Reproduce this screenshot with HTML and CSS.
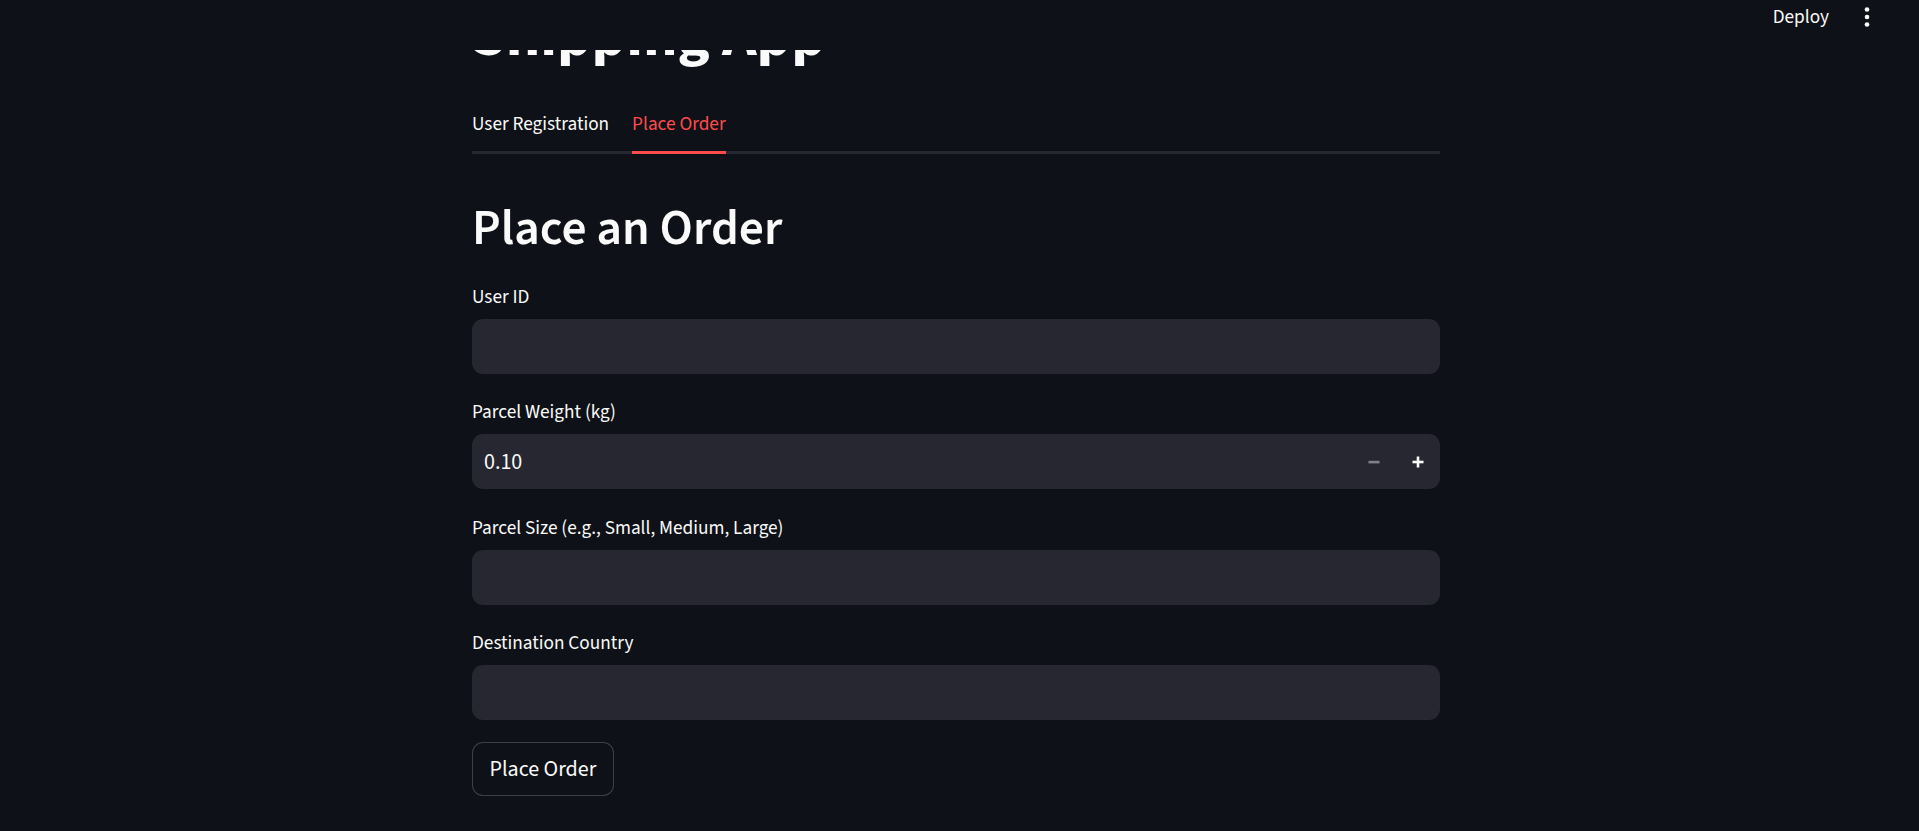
FILE: index.html
```html
<!DOCTYPE html>
<html lang="en">
<head>
<meta charset="utf-8">
<title>Shipping App</title>
<link rel="stylesheet" href="styles.css">
</head>
<body>
<header class="topbar">
  <div class="toolbar">
    <button class="deploy" type="button">Deploy</button>
    <button class="menu" type="button" aria-label="Main menu">
      <svg width="28" height="28" viewBox="0 0 24 24"><circle cx="12" cy="5.6" r="2" fill="#fafafa"/><circle cx="12" cy="12" r="2" fill="#fafafa"/><circle cx="12" cy="18.4" r="2" fill="#fafafa"/></svg>
    </button>
  </div>
</header>
<main class="page">
  <h1 class="title">Shipping App</h1>
  <div class="tabs">
    <div class="tablist">
      <div class="tab">User Registration</div>
      <div class="tab active">Place Order</div>
    </div>
    <section class="panel">
      <h2 class="heading">Place an Order</h2>
      <div class="field">
        <label class="label">User ID</label>
        <div class="input"></div>
      </div>
      <div class="field">
        <label class="label">Parcel Weight (kg)</label>
        <div class="input number">
          <span class="value">0.10</span>
          <div class="steps">
            <span class="step minus"><svg width="12" height="12" viewBox="0 0 12 12"><rect x="0.5" y="4.8" width="11" height="2.6" fill="#7d808d"/></svg></span>
            <span class="step plus"><svg width="12" height="12" viewBox="0 0 12 12"><rect x="0.5" y="4.7" width="11" height="2.6" fill="#fafafa"/><rect x="4.7" y="0.5" width="2.6" height="11" fill="#fafafa"/></svg></span>
          </div>
        </div>
      </div>
      <div class="field">
        <label class="label">Parcel Size (e.g., Small, Medium, Large)</label>
        <div class="input"></div>
      </div>
      <div class="field">
        <label class="label">Destination Country</label>
        <div class="input"></div>
      </div>
      <div class="actions">
        <button class="btn" type="button">Place Order</button>
      </div>
    </section>
  </div>
</main>
</body>
</html>
```

FILE: styles.css
```css
html, body {
  margin: 0;
  padding: 0;
  background: #0e1117;
  color: #fafafa;
  font-family: "Source Sans Pro", "Source Sans 3", Lato, "Noto Sans", sans-serif;
}

body {
  padding-right: 7px;
  overflow: hidden;
}

.topbar {
  position: fixed;
  top: 0;
  left: 0;
  right: 0;
  height: 50px;
  background: #0e1117;
  z-index: 10;
}

.toolbar {
  display: flex;
  justify-content: flex-end;
  align-items: center;
  height: 34px;
  padding-right: 38px;
  gap: 24px;
}

.deploy {
  background: none;
  border: none;
  color: #fafafa;
  font-family: inherit;
  font-size: 19.25px;
  padding: 2px 0 0;
  line-height: 1.2;
}

.menu {
  background: none;
  border: none;
  padding: 0;
  width: 28px;
  height: 28px;
  display: flex;
  align-items: center;
  justify-content: center;
}

.page {
  width: 968px;
  margin: 0 auto;
}

.title {
  margin: 0 0 24px;
  font-size: 60.5px;
  line-height: 1.2;
  font-weight: 700;
}

.tablist {
  display: flex;
  gap: 23px;
  height: 54px;
  border-bottom: 3px solid #262730;
}

.tab {
  display: flex;
  align-items: center;
  font-size: 19.25px;
  color: #fafafa;
  border-bottom: 3px solid transparent;
  margin-bottom: -3px;
}

.tab.active {
  color: #ff4b4b;
  border-bottom-color: #ff4b4b;
}

.panel {
  display: flex;
  flex-direction: column;
  gap: 22px;
  padding-top: 24.5px;
}

.heading {
  margin: 21px 0 0;
  font-size: 49.5px;
  line-height: 1.2;
  font-weight: 600;
}

.field {
  display: flex;
  flex-direction: column;
  gap: 5.5px;
}

.label {
  display: flex;
  align-items: center;
  height: 33px;
  font-size: 19.25px;
  color: #fafafa;
}

.input {
  height: 55px;
  background: #262730;
  border-radius: 11px;
}

.number {
  display: flex;
  align-items: center;
  justify-content: space-between;
}

.value {
  padding-left: 12px;
  font-size: 22px;
}

.steps {
  display: flex;
  height: 100%;
}

.step {
  width: 44px;
  display: flex;
  align-items: center;
  justify-content: center;
}

.actions {
  display: flex;
}

.btn {
  height: 54px;
  padding: 0 16.5px;
  background: #0e1117;
  border: 1px solid rgba(250, 250, 250, 0.2);
  border-radius: 11px;
  color: #fafafa;
  font-family: inherit;
  font-size: 22px;
}
```
